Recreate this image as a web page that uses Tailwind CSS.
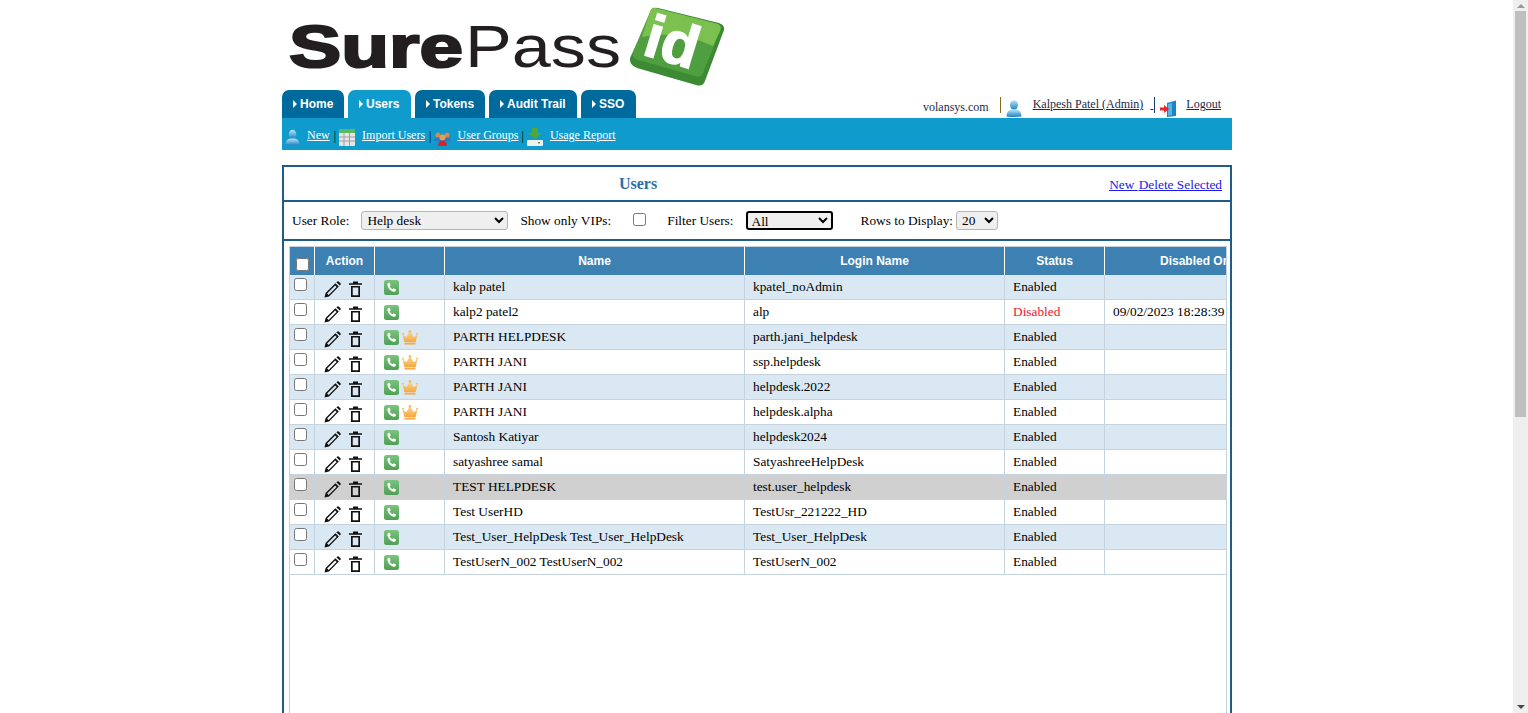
<!DOCTYPE html>
<html lang="en">
<head>
  <meta charset="UTF-8">
  <title>SurePassId - Users</title>
  <script src="https://cdn.jsdelivr.net/npm/@tailwindcss/browser@4"></script>
</head>
<body class="bg-white font-['Liberation_Serif',serif] text-[13.33px] text-black">
  <!-- shared icons -->
  <svg width="0" height="0" class="absolute">
    <defs>
      <linearGradient id="phoneGrad" x1="0" y1="0" x2="0" y2="1"><stop offset="0" stop-color="#7cc47f"/><stop offset="1" stop-color="#4f9f55"/></linearGradient>
      <linearGradient id="personGrad" x1="0" y1="0" x2="0" y2="1"><stop offset="0" stop-color="#bfe3f7"/><stop offset="1" stop-color="#1b82c4"/></linearGradient>
      <linearGradient id="crownGrad" x1="0" y1="0" x2="0" y2="1"><stop offset="0" stop-color="#ffd98a"/><stop offset="1" stop-color="#f5a742"/></linearGradient>
    </defs>
    <symbol id="pencil" viewBox="0 0 17 17"><path d="M0.5 16.5 L1.6 12 L11.4 2.2 L14.8 5.6 L5 15.4 Z M3.1 12.4 L4.6 13.9 L12.6 5.9 L11.1 4.4 Z" fill="#111" fill-rule="evenodd"/><path d="M12.4 1.2 L13.4 0.4 Q14 0 14.6 0.4 L16.6 2.4 Q17 3 16.6 3.6 L15.8 4.6 Z" fill="#111"/></symbol>
    <symbol id="trash" viewBox="0 0 13 16"><path d="M0 2.2 H4 V0.4 H9 V2.2 H13 V3.7 H0 Z" fill="#111"/><path d="M2 5 H11 V15.9 H2 Z M3.7 6.6 V14.3 H9.3 V6.6 Z" fill="#111" fill-rule="evenodd"/></symbol>
    <symbol id="phone" viewBox="0 0 15 15"><rect width="15" height="15" rx="2.5" fill="url(#phoneGrad)"/><path d="M4 3 L5.8 2.8 L6.6 5.4 L5.6 6.3 Q6.5 8.3 8.5 9.3 L9.6 8.3 L12 9.4 L11.6 11.3 Q10.8 12 9.4 11.7 Q4.8 10.2 3.4 5.2 Q3.3 3.8 4 3 Z" fill="#fff"/></symbol>
    <symbol id="crown" viewBox="0 0 16 15"><path d="M2.3 12 L0.5 4.6 L4.4 7.2 L8 1 L11.6 7.2 L15.5 4.6 L13.7 12 Z" fill="url(#crownGrad)"/><rect x="2.5" y="12.6" width="11" height="2" fill="#f4ab4c"/><circle cx="8" cy="1.5" r="1.4" fill="#f8bd63"/><circle cx="1" cy="3.8" r="1" fill="#f8bd63"/><circle cx="15" cy="3.8" r="1" fill="#f8bd63"/></symbol>
    <symbol id="person" viewBox="0 0 16 17"><ellipse cx="8" cy="5" rx="4" ry="4.8" fill="url(#personGrad)"/><path d="M0.5 16.5 Q0.5 10.5 5.5 9.5 L10.5 9.5 Q15.5 10.5 15.5 16.5 Q8 17.5 0.5 16.5 Z" fill="url(#personGrad)"/></symbol>
  </svg>

  <div class="h-[713px] overflow-hidden">
    <div class="ml-[282px] w-[950px]">

      <!-- logo -->
      <svg width="450" height="90" viewBox="0 0 450 90" class="block">
        <text x="7" y="67" font-family="Liberation Sans" font-weight="700" font-size="59" textLength="174" lengthAdjust="spacingAndGlyphs" fill="#231f20" stroke="#231f20" stroke-width="2.2">Sure</text>
        <text x="183" y="67" font-family="Liberation Sans" font-size="59" textLength="156" lengthAdjust="spacingAndGlyphs" fill="#231f20">Pass</text>
        <path d="M371 9 Q373 7 376 8 L437 23 Q443 25 442 30 L423 81 Q421 87 414 85 L355 68 Q347 65 348 58 Z" fill="#3d8a34"/>
        <path d="M373 8 L436 24 Q440 26 438 31 L421 73 Q419 78 413 76 L356 60 Q349 57 351 52 L368 12 Q370 7 373 8 Z" fill="#4f9e3f"/>
        <path d="M373 8 L436 24 Q440 26 438 31 L431 46 Q395 30 360 37 L368 12 Q370 7 373 8 Z" fill="#7cc04f"/>
        <text x="0" y="0" transform="translate(359 54) rotate(17)" font-family="Liberation Sans" font-weight="700" font-size="60" fill="#fff" stroke="#fff" stroke-width="1.5">id</text>
      </svg>

      <!-- tabs + account links -->
      <div class="flex h-[28px] items-end font-['Liberation_Sans',sans-serif] text-[12px] font-bold text-white">
        <a class="flex h-[28px] w-[62px] items-center rounded-t-[7px] bg-[#006a9d] pl-[11px]"><span class="mr-[3px] border-y-[4px] border-l-[4px] border-y-transparent border-l-white"></span>Home</a>
        <a class="ml-[4px] flex h-[28px] w-[63px] items-center rounded-t-[7px] bg-[#0f9bcb] pl-[11px]"><span class="mr-[3px] border-y-[4px] border-l-[4px] border-y-transparent border-l-white"></span>Users</a>
        <a class="ml-[4px] flex h-[28px] w-[70px] items-center rounded-t-[7px] bg-[#006a9d] pl-[11px]"><span class="mr-[3px] border-y-[4px] border-l-[4px] border-y-transparent border-l-white"></span>Tokens</a>
        <a class="ml-[4px] flex h-[28px] w-[88px] items-center rounded-t-[7px] bg-[#006a9d] pl-[11px]"><span class="mr-[3px] border-y-[4px] border-l-[4px] border-y-transparent border-l-white"></span>Audit Trail</a>
        <a class="ml-[4px] flex h-[28px] w-[55px] items-center rounded-t-[7px] bg-[#006a9d] pl-[11px]"><span class="mr-[3px] border-y-[4px] border-l-[4px] border-y-transparent border-l-white"></span>SSO</a>

        <div class="ml-auto flex h-[28px] items-start pr-[11px] font-['Liberation_Serif',serif] text-[12px] font-normal text-[#1c2a4a]">
          <span class="mt-[8px]">volansys.com</span>
          <span class="mt-[7px] ml-[11px] h-[16px] w-[1px] bg-[#8a6d10]"></span>
          <svg width="16" height="17" class="mt-[10px] ml-[5px]"><use href="#person"/></svg>
          <a class="mt-[5px] ml-[11px] underline">Kalpesh Patel (Admin)</a>
          <a class="mt-[5px] ml-[7px] underline">&nbsp;</a>
          <span class="mt-[7px] ml-[1px] h-[16px] w-[1px] bg-[#1c3a7a]"></span>
          <svg width="17" height="17" viewBox="0 0 17 17" class="mt-[10px] ml-[5px]"><path d="M7 3 L16 0.5 V16 L7 17 Z" fill="#1b82c4"/><path d="M8 4 L12 3 V15 L8 16 Z" fill="#58b3e6"/><path d="M0 7.5 H4 V5 L9 9 L4 13 V10.5 H0 Z" fill="#e8262c"/></svg>
          <a class="mt-[5px] ml-[9px] underline">Logout</a>
        </div>
      </div>

      <!-- sub nav -->
      <div class="flex h-[32px] items-start bg-[#0f9bcb] pl-[3px] text-[12px] text-white">
        <svg width="15" height="17" class="mt-[11px]"><use href="#person"/></svg>
        <a class="mt-[8px] ml-[7px] underline">New</a>
        <span class="mt-[9px] ml-[4px] text-black">|</span>
        <svg width="16" height="17" viewBox="0 0 16 17" class="mt-[11px] ml-[3px]"><rect width="16" height="17" rx="1" fill="#e6e6e6"/><rect width="16" height="4" fill="#5cb85c"/><path d="M0 8 H16 M0 12 H16 M5 4 V17 M10.500 4 V17" stroke="#a0a0a0"/></svg>
        <a class="mt-[8px] ml-[7px] underline">Import Users</a>
        <span class="mt-[9px] ml-[4px] text-black">|</span>
        <svg width="17" height="15" viewBox="0 0 17 15" class="mt-[13px] ml-[3px]"><circle cx="4" cy="4" r="2.500" fill="#d88a4a"/><circle cx="13" cy="4" r="2.500" fill="#d88a4a"/><path d="M0 10 Q1 6.500 4 6.500 Q7 6.500 7 10 Z" fill="#2a7ac0"/><path d="M10 10 Q10 6.500 13 6.500 Q16 6.500 17 10 Z" fill="#2a7ac0"/><circle cx="8.500" cy="6.500" r="3" fill="#e0a060"/><path d="M4 15 Q4 9.500 8.500 9.500 Q13 9.500 13 15 Z" fill="#d8232a"/></svg>
        <a class="mt-[8px] ml-[6px] underline">User Groups</a>
        <span class="mt-[9px] ml-[3px] text-black">|</span>
        <svg width="16" height="18" viewBox="0 0 16 18" class="mt-[10px] ml-[3px]"><path d="M5 0 H11 V5 H15 L8 11 L1 5 H5 Z" fill="#4ea83e"/><rect y="12" width="16" height="6" rx="1" fill="#f0f0f0"/><rect x="11" y="14" width="2" height="1.500" fill="#4ea83e"/></svg>
        <a class="mt-[8px] ml-[7px] underline">Usage Report</a>
      </div>

      <!-- users panel -->
      <div class="mt-[15px] h-[600px] border-2 border-[#1f5c8b]">
        <div class="relative flex h-[35px] items-center border-b-2 border-[#1f5c8b]">
          <h1 class="w-full pr-[4px] pl-[0px] text-center text-[16px] font-bold text-[#2a6ea6]"><span class="mr-[234px]">Users</span></h1>
          <div class="absolute top-[8px] right-[8px] text-[#1a1aee] underline"><a>New</a> <a class="ml-[1px]">Delete Selected</a></div>
        </div>

        <div class="flex h-[39px] items-center border-b-2 border-[#1f5c8b] pl-[8px]">
          <label>User Role:</label>
          <select class="ml-[12px] h-[19px] w-[147px] rounded-[3px] border border-[#b5b5b5] bg-[#efefef] pl-[1px]"><option>Help desk</option></select>
          <label class="ml-[12px]">Show only VIPs:</label>
          <input type="checkbox" class="ml-[22px] mb-[3px]">
          <label class="ml-[21px]">Filter Users:</label>
          <select class="ml-[12px] h-[19px] w-[87px] rounded-[3px] border-2 border-black bg-[#efefef]"><option>All</option></select>
          <label class="ml-[28px]">Rows to Display:</label>
          <select class="ml-[3px] h-[19px] w-[42px] rounded-[3px] border border-[#b5b5b5] bg-[#efefef] pl-[1px]"><option>20</option></select>
        </div>

        <div class="mt-[5px] ml-[5px] h-[500px] w-[938px] overflow-hidden border border-[#c5d3df]">
          <table class="w-[1015px] table-fixed border-separate border-spacing-0">
            <colgroup>
              <col class="w-[25px]"><col class="w-[60px]"><col class="w-[70px]"><col class="w-[300px]"><col class="w-[260px]"><col class="w-[100px]"><col class="w-[200px]">
            </colgroup>
            <thead class="font-['Liberation_Sans',sans-serif] text-[12px] font-bold text-white">
              <tr class="h-[28px] bg-[#3d81b2]">
                <th class="border-r border-white pt-[6px] pl-[1px]"><input type="checkbox" class="block ml-[5px] h-[13px] w-[13px]"></th>
                <th class="border-r border-white pb-[1px]">Action</th>
                <th class="border-r border-white"></th>
                <th class="border-r border-white pb-[1px]">Name</th>
                <th class="border-r border-white pb-[1px]">Login Name</th>
                <th class="border-r border-white pb-[1px]">Status</th>
                <th class="pb-[1px] pr-[20px]">Disabled On</th>
              </tr>
            </thead>
            <tbody class="[&_td]:h-[25px] [&_td]:border-r [&_td]:border-b [&_td]:border-[#c5d3df] [&_td]:align-top [&_td]:pt-[4px] [&_td]:leading-[15px]">
              <tr class="bg-[#d9e8f3]">
                <td><input type="checkbox" class="block ml-[4px] -mt-[1px]"></td>
                <td><div class="flex gap-[8px] pl-[9px] pt-[2px]"><svg width="17" height="17"><use href="#pencil"/></svg><svg width="13" height="16"><use href="#trash"/></svg></div></td>
                <td><div class="flex gap-[3px] pl-[9px] pt-[1px]"><svg width="15" height="15"><use href="#phone"/></svg></div></td>
                <td class="pl-[8px]">kalp patel</td><td class="pl-[8px]">kpatel_noAdmin</td><td class="pl-[8px]">Enabled</td><td class="pl-[8px]"></td>
              </tr>
              <tr class="bg-white">
                <td><input type="checkbox" class="block ml-[4px] -mt-[1px]"></td>
                <td><div class="flex gap-[8px] pl-[9px] pt-[2px]"><svg width="17" height="17"><use href="#pencil"/></svg><svg width="13" height="16"><use href="#trash"/></svg></div></td>
                <td><div class="flex gap-[3px] pl-[9px] pt-[1px]"><svg width="15" height="15"><use href="#phone"/></svg></div></td>
                <td class="pl-[8px]">kalp2 patel2</td><td class="pl-[8px]">alp</td><td class="pl-[8px] text-[#f0142f]">Disabled</td><td class="pl-[8px]">09/02/2023 18:28:39</td>
              </tr>
              <tr class="bg-[#d9e8f3]">
                <td><input type="checkbox" class="block ml-[4px] -mt-[1px]"></td>
                <td><div class="flex gap-[8px] pl-[9px] pt-[2px]"><svg width="17" height="17"><use href="#pencil"/></svg><svg width="13" height="16"><use href="#trash"/></svg></div></td>
                <td><div class="flex gap-[3px] pl-[9px] pt-[1px]"><svg width="15" height="15"><use href="#phone"/></svg><svg width="16" height="15"><use href="#crown"/></svg></div></td>
                <td class="pl-[8px]">PARTH HELPDESK</td><td class="pl-[8px]">parth.jani_helpdesk</td><td class="pl-[8px]">Enabled</td><td class="pl-[8px]"></td>
              </tr>
              <tr class="bg-white">
                <td><input type="checkbox" class="block ml-[4px] -mt-[1px]"></td>
                <td><div class="flex gap-[8px] pl-[9px] pt-[2px]"><svg width="17" height="17"><use href="#pencil"/></svg><svg width="13" height="16"><use href="#trash"/></svg></div></td>
                <td><div class="flex gap-[3px] pl-[9px] pt-[1px]"><svg width="15" height="15"><use href="#phone"/></svg><svg width="16" height="15"><use href="#crown"/></svg></div></td>
                <td class="pl-[8px]">PARTH JANI</td><td class="pl-[8px]">ssp.helpdesk</td><td class="pl-[8px]">Enabled</td><td class="pl-[8px]"></td>
              </tr>
              <tr class="bg-[#d9e8f3]">
                <td><input type="checkbox" class="block ml-[4px] -mt-[1px]"></td>
                <td><div class="flex gap-[8px] pl-[9px] pt-[2px]"><svg width="17" height="17"><use href="#pencil"/></svg><svg width="13" height="16"><use href="#trash"/></svg></div></td>
                <td><div class="flex gap-[3px] pl-[9px] pt-[1px]"><svg width="15" height="15"><use href="#phone"/></svg><svg width="16" height="15"><use href="#crown"/></svg></div></td>
                <td class="pl-[8px]">PARTH JANI</td><td class="pl-[8px]">helpdesk.2022</td><td class="pl-[8px]">Enabled</td><td class="pl-[8px]"></td>
              </tr>
              <tr class="bg-white">
                <td><input type="checkbox" class="block ml-[4px] -mt-[1px]"></td>
                <td><div class="flex gap-[8px] pl-[9px] pt-[2px]"><svg width="17" height="17"><use href="#pencil"/></svg><svg width="13" height="16"><use href="#trash"/></svg></div></td>
                <td><div class="flex gap-[3px] pl-[9px] pt-[1px]"><svg width="15" height="15"><use href="#phone"/></svg><svg width="16" height="15"><use href="#crown"/></svg></div></td>
                <td class="pl-[8px]">PARTH JANI</td><td class="pl-[8px]">helpdesk.alpha</td><td class="pl-[8px]">Enabled</td><td class="pl-[8px]"></td>
              </tr>
              <tr class="bg-[#d9e8f3]">
                <td><input type="checkbox" class="block ml-[4px] -mt-[1px]"></td>
                <td><div class="flex gap-[8px] pl-[9px] pt-[2px]"><svg width="17" height="17"><use href="#pencil"/></svg><svg width="13" height="16"><use href="#trash"/></svg></div></td>
                <td><div class="flex gap-[3px] pl-[9px] pt-[1px]"><svg width="15" height="15"><use href="#phone"/></svg></div></td>
                <td class="pl-[8px]">Santosh Katiyar</td><td class="pl-[8px]">helpdesk2024</td><td class="pl-[8px]">Enabled</td><td class="pl-[8px]"></td>
              </tr>
              <tr class="bg-white">
                <td><input type="checkbox" class="block ml-[4px] -mt-[1px]"></td>
                <td><div class="flex gap-[8px] pl-[9px] pt-[2px]"><svg width="17" height="17"><use href="#pencil"/></svg><svg width="13" height="16"><use href="#trash"/></svg></div></td>
                <td><div class="flex gap-[3px] pl-[9px] pt-[1px]"><svg width="15" height="15"><use href="#phone"/></svg></div></td>
                <td class="pl-[8px]">satyashree samal</td><td class="pl-[8px]">SatyashreeHelpDesk</td><td class="pl-[8px]">Enabled</td><td class="pl-[8px]"></td>
              </tr>
              <tr class="bg-[#d0d0d0]">
                <td><input type="checkbox" class="block ml-[4px] -mt-[1px]"></td>
                <td><div class="flex gap-[8px] pl-[9px] pt-[2px]"><svg width="17" height="17"><use href="#pencil"/></svg><svg width="13" height="16"><use href="#trash"/></svg></div></td>
                <td><div class="flex gap-[3px] pl-[9px] pt-[1px]"><svg width="15" height="15"><use href="#phone"/></svg></div></td>
                <td class="pl-[8px]">TEST HELPDESK</td><td class="pl-[8px]">test.user_helpdesk</td><td class="pl-[8px]">Enabled</td><td class="pl-[8px]"></td>
              </tr>
              <tr class="bg-white">
                <td><input type="checkbox" class="block ml-[4px] -mt-[1px]"></td>
                <td><div class="flex gap-[8px] pl-[9px] pt-[2px]"><svg width="17" height="17"><use href="#pencil"/></svg><svg width="13" height="16"><use href="#trash"/></svg></div></td>
                <td><div class="flex gap-[3px] pl-[9px] pt-[1px]"><svg width="15" height="15"><use href="#phone"/></svg></div></td>
                <td class="pl-[8px]">Test UserHD</td><td class="pl-[8px]">TestUsr_221222_HD</td><td class="pl-[8px]">Enabled</td><td class="pl-[8px]"></td>
              </tr>
              <tr class="bg-[#d9e8f3]">
                <td><input type="checkbox" class="block ml-[4px] -mt-[1px]"></td>
                <td><div class="flex gap-[8px] pl-[9px] pt-[2px]"><svg width="17" height="17"><use href="#pencil"/></svg><svg width="13" height="16"><use href="#trash"/></svg></div></td>
                <td><div class="flex gap-[3px] pl-[9px] pt-[1px]"><svg width="15" height="15"><use href="#phone"/></svg></div></td>
                <td class="pl-[8px]">Test_User_HelpDesk Test_User_HelpDesk</td><td class="pl-[8px]">Test_User_HelpDesk</td><td class="pl-[8px]">Enabled</td><td class="pl-[8px]"></td>
              </tr>
              <tr class="bg-white">
                <td><input type="checkbox" class="block ml-[4px] -mt-[1px]"></td>
                <td><div class="flex gap-[8px] pl-[9px] pt-[2px]"><svg width="17" height="17"><use href="#pencil"/></svg><svg width="13" height="16"><use href="#trash"/></svg></div></td>
                <td><div class="flex gap-[3px] pl-[9px] pt-[1px]"><svg width="15" height="15"><use href="#phone"/></svg></div></td>
                <td class="pl-[8px]">TestUserN_002 TestUserN_002</td><td class="pl-[8px]">TestUserN_002</td><td class="pl-[8px]">Enabled</td><td class="pl-[8px]"></td>
              </tr>
            </tbody>
          </table>
        </div>
      </div>
    </div>
  </div>

  <!-- scrollbar -->
  <div class="fixed top-0 right-0 flex h-[713px] w-[15px] flex-col items-center bg-[#efefef]">
    <span class="mt-[4px] border-x-[4px] border-b-[4px] border-x-transparent border-b-[#9a9a9a]"></span>
    <span class="mt-[3px] h-[406px] w-[11px] bg-[#bfbfbf]"></span>
    <span class="mt-auto mb-[4px] border-x-[4px] border-t-[4px] border-x-transparent border-t-[#4a4a4a]"></span>
  </div>
</body>
</html>
